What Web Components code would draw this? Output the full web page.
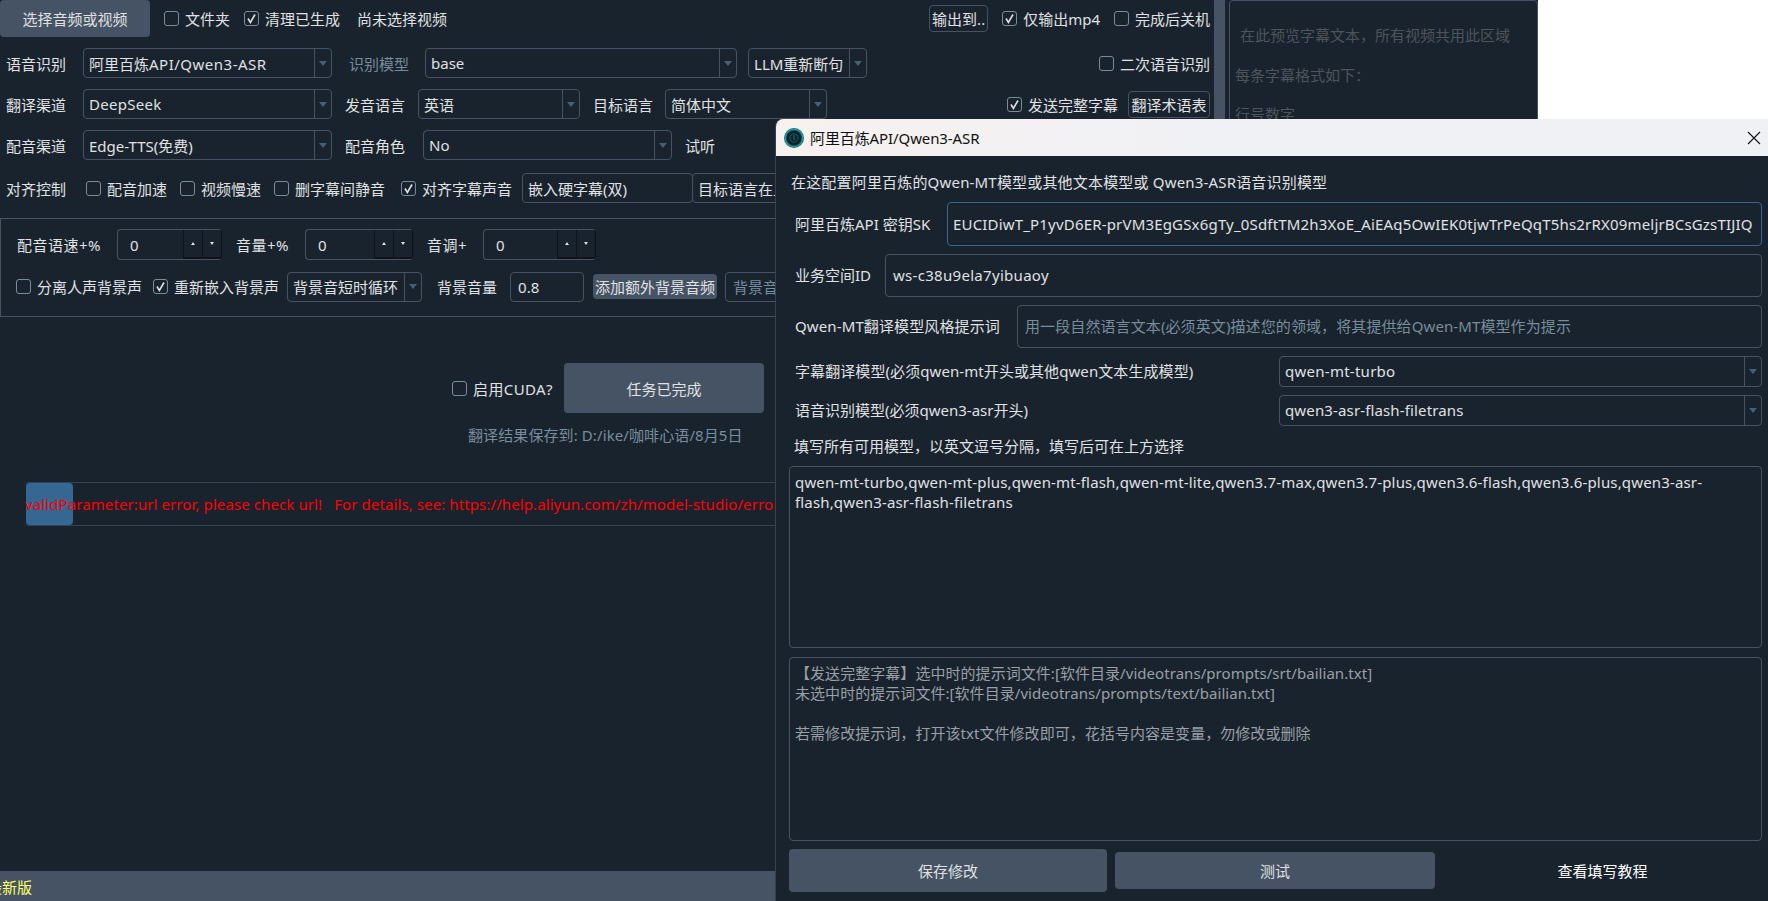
<!DOCTYPE html>
<html lang="zh">
<head>
<meta charset="utf-8">
<title>pyVideoTrans</title>
<style>
  html, body { margin: 0; height: 100%; background: #fff; overflow: hidden; }
  body { font: 15px "Noto Sans", "Noto Sans CJK SC", sans-serif; color: #e0e1e3; }
</style>
</head>
<body>
<main-window></main-window>
<settings-dialog></settings-dialog>
<script>
class XCheck extends HTMLElement {
  connectedCallback() {
    const on = this.hasAttribute('checked');
    this.attachShadow({ mode: 'open' });
    this.shadowRoot.innerHTML = `
      <style>
        :host { display: inline-flex; align-items: center; gap: 6px; white-space: nowrap; }
        .box { width: 13px; height: 13px; border: 1.5px solid #788d9c; border-radius: 3px; flex: none; display: flex; }
        svg { width: 13px; height: 13px; }
      </style>
      <span class="box">${on ? '<svg viewBox="0 0 13 13"><path d="M3 6.5 5.4 10.5 10 2.5" fill="none" stroke="#e0e1e3" stroke-width="1.6"/></svg>' : ''}</span>
      <slot></slot>
    `;
  }
}
customElements.define('x-check', XCheck);

class XCombo extends HTMLElement {
  connectedCallback() {
    this.attachShadow({ mode: 'open' });
    this.shadowRoot.innerHTML = `
      <style>
        :host { display: flex; align-items: stretch; box-sizing: border-box; height: 30px; border: 1px solid #455364; border-radius: 4px; flex: none; white-space: nowrap; overflow: hidden; }
        .val { flex: 1; padding-left: 5px; display: flex; align-items: center; overflow: hidden; }
        .arrow { width: 16px; flex: none; border-left: 1px solid #455364; display: flex; align-items: center; justify-content: center; }
        .arrow::after { content: ''; border: 4px solid transparent; border-top: 5px solid #455f74; border-bottom: 0; }
      </style>
      <span class="val"><slot></slot></span>
      <span class="arrow"></span>
    `;
  }
}
customElements.define('x-combo', XCombo);

class XSpin extends HTMLElement {
  connectedCallback() {
    this.attachShadow({ mode: 'open' });
    this.shadowRoot.innerHTML = `
      <style>
        :host { display: flex; align-items: stretch; box-sizing: border-box; height: 31px; border: 1px solid #455364; border-right-color: #0e141a; border-radius: 4px; flex: none; overflow: hidden; }
        .val { flex: 1; padding-left: 12px; display: flex; align-items: center; }
        .b { width: 19px; flex: none; box-sizing: border-box; background: #19232d; border-left: 1px solid #0e141a; border-bottom: 2px solid #0e141a; display: flex; align-items: center; justify-content: center; }
        .up::after { content: ''; border: 2.5px solid transparent; border-bottom: 3px solid #e0e1e3; border-top: 0; }
        .down::after { content: ''; border: 2.5px solid transparent; border-top: 3px solid #e0e1e3; border-bottom: 0; }
      </style>
      <span class="val"><slot></slot></span>
      <span class="b up"></span>
      <span class="b down"></span>
    `;
  }
}
customElements.define('x-spin', XSpin);

class XButton extends HTMLElement {
  connectedCallback() {
    this.attachShadow({ mode: 'open' });
    this.shadowRoot.innerHTML = `
      <style>
        :host { display: flex; align-items: center; justify-content: center; box-sizing: border-box; background: #455364; border-radius: 4px; flex: none; white-space: nowrap; }
        :host([outline]) { background: none; border: 1px solid #455364; }
      </style>
      <slot></slot>
    `;
  }
}
customElements.define('x-button', XButton);

class XField extends HTMLElement {
  connectedCallback() {
    this.attachShadow({ mode: 'open' });
    this.shadowRoot.innerHTML = `
      <style>
        :host { display: flex; align-items: center; box-sizing: border-box; border: 1px solid #455364; border-radius: 4px; padding: 0 7px; flex: none; white-space: nowrap; overflow: hidden; height: 30px; }
        :host([focus]) { border-color: #346792; }
        :host([hint]) { color: #788d9c; }
      </style>
      <slot></slot>
    `;
  }
}
customElements.define('x-field', XField);

class XText extends HTMLElement {
  connectedCallback() {
    this.attachShadow({ mode: 'open' });
    this.shadowRoot.innerHTML = `
      <style>
        :host { display: block; box-sizing: border-box; border: 1px solid #455364; border-radius: 4px; padding: 5px; line-height: 20px; overflow: hidden; }
      </style>
      <slot></slot>
    `;
  }
}
customElements.define('x-text', XText);

class MainWindow extends HTMLElement {
  connectedCallback() {
    this.attachShadow({ mode: 'open' });
    this.shadowRoot.innerHTML = `
      <style>
        :host { display: flex; flex-direction: column; width: 1538px; height: 901px; background: #19232d; color: #e0e1e3; overflow: hidden; }
        .top { flex: 1; display: flex; min-height: 0; }
        .left { width: 1214px; flex: none; display: flex; flex-direction: column; }
        .split { width: 11px; flex: none; background: #455364; }
        .panel { flex: 1; margin-left: 4px; box-sizing: border-box; border: 1px solid #455364; border-radius: 4px; padding: 15px 5px 0; color: #4d545c; line-height: 39.5px; white-space: nowrap; }
        .panel div:first-child { padding-left: 5px; }
        .row { display: flex; align-items: center; white-space: nowrap; flex: none; height: 30px; margin-top: 11px; padding-left: 6px; }
        .row > span { flex: none; }
        .dim { color: #788d9c; }
        .frame { margin-top: 15px; height: 99px; box-sizing: border-box; border: 1px solid #455364; padding-top: 10px; flex: none; }
        .frame .row { margin-top: 0; padding-left: 16px; height: 31px; }
        .frame .row + .row { margin-top: 11px; padding-left: 15px; }
        .run { display: flex; align-items: center; justify-content: flex-end; margin: 46px 0 0; padding-right: 450px; height: 50px; flex: none; }
        .out { margin: 12px 0 0 468px; height: 20px; line-height: 20px; color: #788d9c; white-space: nowrap; flex: none; letter-spacing: .1px; }
        .bar { position: relative; margin: 37px 0 0 25px; height: 44px; box-sizing: border-box; border: 1px solid #37414f; border-left: 0; flex: none; display: flex; align-items: center; overflow: hidden; color: #ff0000; white-space: pre; letter-spacing: .1px; border-radius: 4px 0 0 4px; }
        .chunk { position: absolute; left: 1px; top: 0; bottom: 0; width: 47px; background: #346792; border-radius: 4px; }
        .msg { position: relative; }
        .status { height: 30px; flex: none; background: #455364; color: #ffff66; display: flex; align-items: center; white-space: nowrap; overflow: hidden; }
        .status span { margin-left: -13px; }
      </style>
      <div class="top">
        <div class="left">
          <div class="row" style="height:37px;margin-top:0;padding-left:0">
            <x-button style="width:150px;height:37px">选择音频或视频</x-button>
            <x-check style="margin-left:14px">文件夹</x-check>
            <x-check checked style="margin-left:14px">清理已生成</x-check>
            <span style="margin-left:17px">尚未选择视频</span>
            <x-button outline style="margin-left:auto;width:59px;height:27px">输出到..</x-button>
            <x-check checked style="margin-left:14px">仅输出mp4</x-check>
            <x-check style="margin-left:14px;margin-right:4px">完成后关机</x-check>
          </div>
          <div class="row">
            <span>语音识别</span>
            <x-combo style="width:249px;margin-left:17px"><span>阿里百炼<span style="letter-spacing:.5px">API/Qwen3-ASR</span></span></x-combo>
            <span class="dim" style="margin-left:17px">识别模型</span>
            <x-combo style="width:312px;margin-left:16px">base</x-combo>
            <x-combo style="width:119px;margin-left:11px">LLM重新断句</x-combo>
            <x-check style="margin-left:auto;margin-right:4px">二次语音识别</x-check>
          </div>
          <div class="row">
            <span>翻译渠道</span>
            <x-combo style="width:249px;margin-left:17px"><span style="letter-spacing:.3px">DeepSeek</span></x-combo>
            <span style="margin-left:13px">发音语言</span>
            <x-combo style="width:162px;margin-left:13px">英语</x-combo>
            <span style="margin-left:13px">目标语言</span>
            <x-combo style="width:162px;margin-left:12px">简体中文</x-combo>
            <x-check checked style="margin-left:auto">发送完整字幕</x-check>
            <x-button outline style="width:82px;height:27px;margin-left:10px;margin-right:4px">翻译术语表</x-button>
          </div>
          <div class="row">
            <span>配音渠道</span>
            <x-combo style="width:249px;margin-left:17px">Edge-TTS(免费)</x-combo>
            <span style="margin-left:13px">配音角色</span>
            <x-combo style="width:249px;margin-left:18px">No</x-combo>
            <span style="margin-left:13px">试听</span>
          </div>
          <div class="row" style="margin-top:13px">
            <span>对齐控制</span>
            <x-check style="margin-left:20px">配音加速</x-check>
            <x-check style="margin-left:13px">视频慢速</x-check>
            <x-check style="margin-left:13px">删字幕间静音</x-check>
            <x-check checked style="margin-left:16px">对齐字幕声音</x-check>
            <x-field style="width:171px;margin-left:10px;padding:0 5px">嵌入硬字幕(双)</x-field>
            <x-field style="width:140px;margin-left:-1px;padding:0 5px">目标语言在上</x-field>
          </div>
          <div class="frame">
            <div class="row">
              <span style="width:100px;letter-spacing:.5px">配音语速+%</span>
              <x-spin style="width:105px">0</x-spin>
              <span style="width:69px;margin-left:14px;letter-spacing:.5px">音量+%</span>
              <x-spin style="width:108px">0</x-spin>
              <span style="width:56px;margin-left:14px;letter-spacing:.5px">音调+</span>
              <x-spin style="width:113px">0</x-spin>
            </div>
            <div class="row">
              <x-check>分离人声背景声</x-check>
              <x-check checked style="margin-left:11px">重新嵌入背景声</x-check>
              <x-combo style="width:135px;margin-left:8px">背景音短时循环</x-combo>
              <span style="margin-left:15px">背景音量</span>
              <x-field style="width:74px;margin-left:13px">0.8</x-field>
              <x-button style="width:124px;height:25px;margin-left:9px">添加额外背景音频</x-button>
              <x-field hint style="width:200px;margin-left:8px;padding:0 7px">背景音频</x-field>
            </div>
          </div>
          <div class="run">
            <x-check><span style="letter-spacing:.4px">启用CUDA?</span></x-check>
            <x-button style="width:200px;height:50px;margin-left:11px">任务已完成</x-button>
          </div>
          <div class="out">翻译结果保存到: D:/ike/咖啡心语/8月5日</div>
          <div class="bar"><span class="chunk"></span><span class="msg">validParameter:url error, please check url!   For details, see: https://help.aliyun.com/zh/model-studio/error-code</span></div>
        </div>
        <div class="split"></div>
        <div class="panel">
          <div>在此预览字幕文本，所有视频共用此区域</div>
          <div>每条字幕格式如下：</div>
          <div>行号数字</div>
        </div>
      </div>
      <div class="status"><span>最新版</span></div>
    `;
  }
}
customElements.define('main-window', MainWindow);

class SettingsDialog extends HTMLElement {
  connectedCallback() {
    this.attachShadow({ mode: 'open' });
    this.shadowRoot.innerHTML = `
      <style>
        :host { position: absolute; left: 775px; top: 119px; width: 993px; height: 782px; background: #19232d; color: #e0e1e3; display: flex; flex-direction: column; border-top-left-radius: 8px; overflow: hidden; box-sizing: border-box; border-left: 1px solid #37414f; }
        .title { height: 37px; flex: none; background: linear-gradient(90deg, #f7f1ef, #f0f1f5 45%); color: #111; display: flex; align-items: center; padding: 0 8px; gap: 6px; letter-spacing: -.1px; }
        .title svg.ic { width: 20px; height: 20px; flex: none; }
        .title svg.x { width: 14px; height: 14px; margin-left: auto; margin-right: -1px; flex: none; }
        .body { flex: 1; display: flex; flex-direction: column; padding: 0 6px 0 13px; white-space: nowrap; }
        .head { margin: 16px 0 0 2px; height: 20px; line-height: 20px; letter-spacing: .18px; }
        .row { display: flex; align-items: center; height: 43px; margin-top: 8px; flex: none; }
        .row > span { flex: none; padding-left: 6px; padding-bottom: 2px; box-sizing: border-box; }
        .row x-field { flex: 1; height: 100%; min-width: 0; padding-bottom: 2px; }
        .row x-combo { flex: 1; height: 31px; padding-bottom: 0; }
        .short { height: 31px; }
        .note { margin: 10px 0 0 5px; height: 20px; line-height: 20px; }
        .gray { color: #9aa0a6; letter-spacing: .05px; }
        .btns { display: flex; align-items: center; gap: 8px; height: 43px; margin-top: 8px; flex: none; }
        .link { flex: 1; text-align: center; color: #fff; }
      </style>
      <div class="title">
        <svg class="ic" viewBox="0 0 20 20">
          <defs><radialGradient id="g" cx="50%" cy="50%" r="50%"><stop offset="0" stop-color="#0a2f35"/><stop offset=".68" stop-color="#041c21"/><stop offset=".86" stop-color="#22a0ad"/><stop offset="1" stop-color="#0f5a63"/></radialGradient></defs>
          <circle cx="10" cy="10" r="10" fill="url(#g)"/>
          <circle cx="10" cy="10" r="4.2" fill="none" stroke="#175f68" stroke-width="1"/>
          <path d="M10 7v5" stroke="#175f68" stroke-width="1.3"/>
        </svg>
        <span>阿里百炼API/Qwen3-ASR</span>
        <svg class="x" viewBox="0 0 14 14"><path d="M1 1 13 13M13 1 1 13" stroke="#111" stroke-width="1.1"/></svg>
      </div>
      <div class="body">
        <div class="head">在这配置阿里百炼的Qwen-MT模型或其他文本模型或 Qwen3-ASR语音识别模型</div>
        <div class="row" style="height:44px;margin-top:10px">
          <span style="width:158px">阿里百炼API 密钥SK</span>
          <x-field focus style="padding:0 5px;letter-spacing:.18px">EUCIDiwT_P1yvD6ER-prVM3EgGSx6gTy_0SdftTM2h3XoE_AiEAq5OwIEK0tjwTrPeQqT5hs2rRX09meljrBCsGzsTIJIQ</x-field>
        </div>
        <div class="row">
          <span style="width:96px">业务空间ID</span>
          <x-field style="letter-spacing:.3px">ws-c38u9ela7yibuaoy</x-field>
        </div>
        <div class="row">
          <span style="width:228px;letter-spacing:.12px">Qwen-MT翻译模型风格提示词</span>
          <x-field hint style="letter-spacing:.1px">用一段自然语言文本(必须英文)描述您的领域，将其提供给Qwen-MT模型作为提示</x-field>
        </div>
        <div class="row short">
          <span style="width:490px;letter-spacing:.08px">字幕翻译模型(必须qwen-mt开头或其他qwen文本生成模型)</span>
          <x-combo><span style="letter-spacing:.26px;position:relative;top:-1px">qwen-mt-turbo</span></x-combo>
        </div>
        <div class="row short">
          <span style="width:490px">语音识别模型(必须qwen3-asr开头)</span>
          <x-combo><span style="letter-spacing:.14px;position:relative;top:-1px">qwen3-asr-flash-filetrans</span></x-combo>
        </div>
        <div class="note">填写所有可用模型，以英文逗号分隔，填写后可在上方选择</div>
        <x-text style="height:182px;margin-top:10px;letter-spacing:.157px">qwen-mt-turbo,qwen-mt-plus,qwen-mt-flash,qwen-mt-lite,qwen3.7-max,qwen3.7-plus,qwen3.6-flash,qwen3.6-plus,qwen3-asr-<br>flash,qwen3-asr-flash-filetrans</x-text>
        <x-text class="gray" style="height:184px;margin-top:9px">【发送完整字幕】选中时的提示词文件:[软件目录/videotrans/prompts/srt/bailian.txt]<br>未选中时的提示词文件:[软件目录/videotrans/prompts/text/bailian.txt]<br><br>若需修改提示词，打开该txt文件修改即可，花括号内容是变量，勿修改或删除</x-text>
        <div class="btns">
          <x-button style="width:318px;height:43px">保存修改</x-button>
          <x-button style="width:320px;height:37px">测试</x-button>
          <span class="link">查看填写教程</span>
        </div>
      </div>
    `;
  }
}
customElements.define('settings-dialog', SettingsDialog);
</script>
</body>
</html>
